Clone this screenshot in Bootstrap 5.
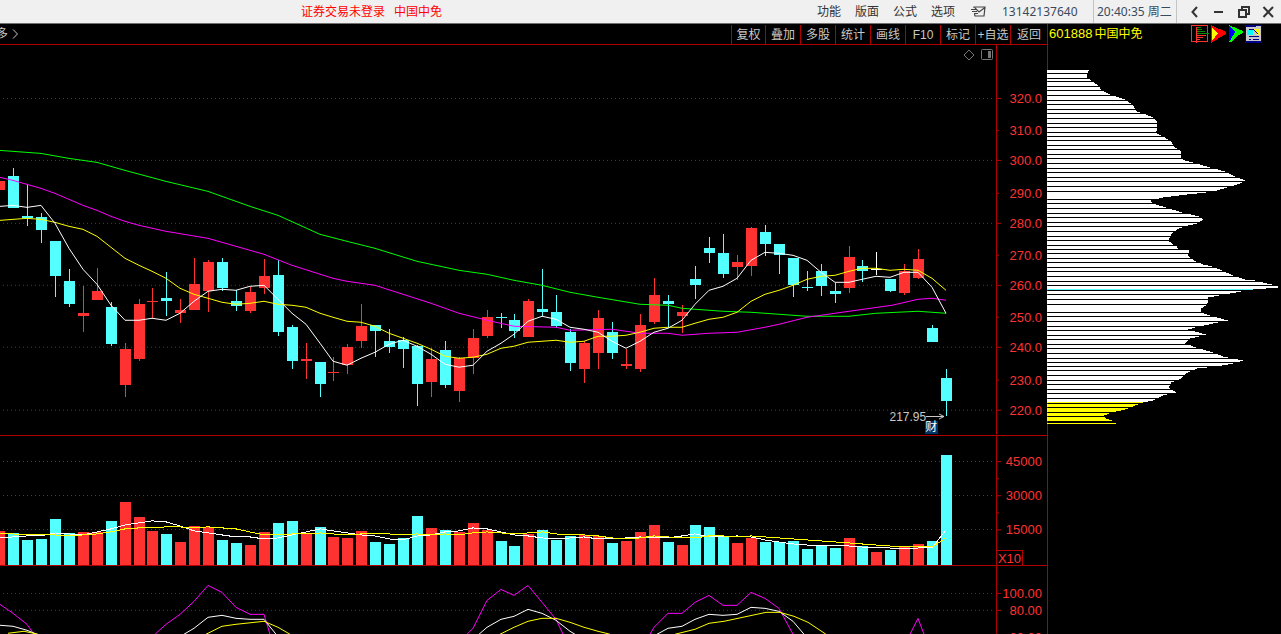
<!DOCTYPE html>
<html lang="zh-CN">
<head>
<meta charset="utf-8">
<meta name="viewport" content="width=device-width, initial-scale=1">
<title>601888 中国中免</title>
<link rel="stylesheet" href="https://cdn.jsdelivr.net/npm/bootstrap@5.3.0/dist/css/bootstrap.min.css">
<style>
:root { --line: #b00000; --up: #ff3232; --down: #54ffff; }
body { background: #000; color: #c8c8c8; font: 12px/16px "Liberation Sans", "Noto Sans CJK SC", sans-serif; }
svg { display: block; }
button { background: none; border: 0; padding: 0; color: inherit; font: inherit; }
.titlebar { height: 24px; background: #f0f0f0; border-bottom: 1px solid #707070; color: #333; font-family: "Noto Sans", "Noto Sans CJK SC", sans-serif; }
.login-state { padding-left: 23.5%; gap: 9px; }
.login-state a { color: #f00; text-decoration: none; }
.menus { gap: 14px; }
.phone { width: 106px; padding-left: 15px; color: #3a4a5c; }
.clock { width: 84px; padding-left: 3px; color: #3a4a5c; border: 1px solid #c4c4c4; border-width: 0 1px; line-height: 23px; }
.window-keys { width: 104px; padding: 0 6px 0 11px; }
.toolbar-row { height: 21px; border-bottom: 1px solid var(--line); }
.more-tab { margin-left: -4px; gap: 4px; }
.tool { width: 35px; height: 19px; border-left: 1px solid var(--line); white-space: nowrap; }
.tool:first-child { width: 34px; }
.tool:last-child { width: 37px; }
.pane { min-height: 0; border-bottom: 1px solid var(--line); }
.pane:last-child { border-bottom: 0; }
.pane-price { flex: 391 1 0; }
.pane-volume { flex: 130 1 0; }
.pane-kdj { flex: 68 1 0; }
.plot { min-width: 0; }
.fill-pane { position: absolute; inset: 0; width: 100%; height: 100%; }
.axis { width: 51px; }
.axis text { font-size: 13px; fill: var(--up); text-anchor: end; }
.unit { right: 24px; bottom: 0; width: 26px; height: 15px; border: 1px solid var(--line); border-width: 1px 1px 0 0; color: var(--up); font-size: 13px; line-height: 15px; text-align: center; }
.pane-keys { top: 4px; right: 3px; gap: 6px; }
.low-note { right: 5.1%; top: 94.2%; line-height: 10px; }
.finance-mark { right: 5.8%; top: 96.4%; width: 13px; height: 13px; background: #036; color: #fff; line-height: 13px; }
.side { width: 234px; }
.stock-title { height: 20px; padding-left: 2px; color: #ff0; }
.stock-code { font-size: 13px; margin-right: 2px; }
.side-keys { width: 90px; }
</style>
</head>
<body class="vh-100 d-flex flex-column overflow-hidden">
<header class="titlebar d-flex align-items-center flex-shrink-0">
  <div class="login-state d-flex flex-grow-1"><a href="#">证券交易未登录</a><a href="#">中国中免</a></div>
  <nav class="menus d-flex align-items-center">
    <button type="button">功能</button><button type="button">版面</button><button type="button">公式</button><button type="button">选项</button>
    <button type="button" aria-label="消息"><svg width="18" height="14" viewBox="0 0 18 14" fill="none" stroke="#444"><path d="M5 3V2H16L15 11H6L5.500 9M6 3L10 7L16 2.500M2 4.500H7M3 6.500H8M5 8.500H9" stroke-width="1.200"/></svg></button>
  </nav>
  <div class="phone">13142137640</div>
  <div class="clock">20:40:35 周二</div>
  <div class="window-keys d-flex justify-content-between align-items-center">
    <button type="button" aria-label="返回"><svg width="14" height="14" viewBox="0 0 14 14" fill="none" stroke="#333" stroke-width="2"><path d="M9 2L4.500 7L9 12"/></svg></button>
    <button type="button" aria-label="最小化"><svg width="14" height="14" viewBox="0 0 14 14"><path d="M2 6h9v2H2z" fill="#333"/></svg></button>
    <button type="button" aria-label="还原"><svg width="14" height="14" viewBox="0 0 14 14" fill="none" stroke="#333" stroke-width="2"><path d="M2 5H9V12H2ZM5 5V2H12V9H9"/></svg></button>
    <button type="button" aria-label="关闭"><svg width="14" height="14" viewBox="0 0 14 14" fill="none" stroke="#333" stroke-width="2"><path d="M2.500 2L12 12M12 2L2.500 12"/></svg></button>
  </div>
</header>
<main class="d-flex flex-grow-1 overflow-hidden">
  <section class="d-flex flex-column flex-grow-1 plot">
    <div class="toolbar-row d-flex justify-content-between align-items-end flex-shrink-0">
      <button type="button" class="more-tab d-flex align-items-center align-self-center"><span>多</span><svg width="7" height="10" viewBox="0 0 7 10" fill="none" stroke="#c8c8c8"><path d="M1 .5L5.500 5L1 9.500"/></svg></button>
      <div class="d-flex" id="tools"></div>
    </div>
    <div class="pane pane-price d-flex">
      <div class="plot position-relative flex-grow-1">
        <svg class="fill-pane" id="price" viewBox="0 45 996 390" preserveAspectRatio="none" shape-rendering="crispEdges"></svg>
        <div class="pane-keys position-absolute d-flex">
          <button type="button" aria-label="标记"><svg width="12" height="12" viewBox="0 0 12 12" fill="none" stroke="#777"><path d="M6 1L11 6L6 11L1 6Z"/></svg></button>
          <button type="button" aria-label="侧栏"><svg width="12" height="12" viewBox="0 0 12 12" fill="none" stroke="#777"><rect x=".5" y=".5" width="11" height="10" rx="1"/><path d="M7 2h3v7H7z" fill="#777" stroke="none"/></svg></button>
        </div>
        <div class="low-note position-absolute d-flex align-items-start"><span>217.95</span><svg width="19" height="10" viewBox="0 0 19 10" fill="none" stroke="#c8c8c8"><path d="M0 4.500H18M13 2L18 4.500L13 7"/></svg></div>
        <span class="finance-mark position-absolute">财</span>
      </div>
      <div class="axis position-relative"><svg class="fill-pane" id="priceAxis"></svg></div>
    </div>
    <div class="pane pane-volume d-flex">
      <div class="plot position-relative flex-grow-1"><svg class="fill-pane" id="volume" viewBox="0 436 996 129" preserveAspectRatio="none" shape-rendering="crispEdges"></svg></div>
      <div class="axis position-relative"><svg class="fill-pane" id="volumeAxis"></svg><span class="unit position-absolute">X10</span></div>
    </div>
    <div class="pane pane-kdj d-flex">
      <div class="plot position-relative flex-grow-1"><svg class="fill-pane" id="kdj" viewBox="0 566 996 68" preserveAspectRatio="none" shape-rendering="crispEdges"></svg></div>
      <div class="axis position-relative"><svg class="fill-pane" id="kdjAxis"></svg></div>
    </div>
  </section>
  <aside class="side d-flex flex-column flex-shrink-0 position-relative">
    <svg class="fill-pane" id="profile" viewBox="0 24 234 610" preserveAspectRatio="none" shape-rendering="crispEdges"></svg>
    <div class="stock-title d-flex justify-content-between align-items-center position-relative">
      <div><span class="stock-code">601888</span>中国中免</div>
      <div class="side-keys d-flex">
        <button type="button" aria-label="分布"><svg width="20" height="20" viewBox="0 0 20 20" fill="none" shape-rendering="crispEdges"><path d="M.5 1.500H16.500V17.500H.5Z" stroke="#ff3232"/><path d="M5 3.500H10M5 5.500H11M5 7.500H14M5 9.500H18" stroke="#0a8c0a"/><path d="M5 11.500H15M5 13.500H12M5 15.500H9M5.500 3V19" stroke="#ff3232"/></svg></button>
        <button type="button" aria-label="红旗"><svg width="18" height="20" viewBox="0 0 18 20" shape-rendering="crispEdges"><path d="M0 1L15 8V10L0 19Z" fill="#f00"/><path d="M1 4L7 9L1 17Z" fill="#ff0"/></svg></button>
        <button type="button" aria-label="绿旗"><svg width="16" height="20" viewBox="0 0 16 20" shape-rendering="crispEdges"><path d="M0 1L14 7V9L8 12L3 18H0Z" fill="#0f0"/><path d="M0 2L6 8L1 17H0Z" fill="#00f"/></svg></button>
        <button type="button" aria-label="报表"><svg width="18" height="20" viewBox="0 0 18 20" shape-rendering="crispEdges"><path d="M0 1H17V19H0Z" fill="#008"/><path d="M1 3H11V2H16V17H1Z" fill="#c8c8c8"/><path d="M2 6H8V11H2Z" fill="#0ff"/><path d="M9 5H15V11H12Z" fill="#ff0"/><path d="M4 5.500H8M8 5L13 10M4 12.500H14M4 15.500H6M8 15.500H14" stroke="#008"/></svg></button>
      </div>
    </div>
  </aside>
</main>
<script src="https://cdn.jsdelivr.net/npm/bootstrap@5.3.0/dist/js/bootstrap.bundle.min.js"></script>
<script>
const RED = '#ff3232', CYAN = '#54ffff', LINE = '#b00000';
const byId = id => document.getElementById(id);
byId('tools').innerHTML = ['复权','叠加','多股','统计','画线','F10','标记','+自选','返回']
  .map(t => `<button type="button" class="tool">${t}</button>`).join('');

// horizontal position of the n-th trading day
const dayX = n => 13 + 14 * n - Math.floor((n + 3) / 13) - (n === 61 ? 1 : 0);
const rect = (x, y, w, h, c) => `<rect x="${x}" y="${y}" width="${w}" height="${h}" fill="${c}"/>`;
const grid = ys => ys.map(y => `<path d="M3 ${y}.5H994" stroke="#b01010" stroke-dasharray="1 3"/>`).join('');
const poly = (pts, c) => `<polyline points="${pts.map(p => p[0] + ',' + (p[1] + .5)).join(' ')}" fill="none" stroke="${c}"/>`;
const pairs = s => s.trim().split(/\s+/).map(p => p.split(',').map(Number));
const series = a => a.map((y, i) => [i ? dayX(i - 1) : 0, y]);

// colour, high, body top, body bottom, low
const candles = `c168,176,208,208 c184,216,218,226 c213,217,230,243 c241,241,276,297 c269,281,304,307 r286,313,316,332 r268,291,300,300
c302,307,344,346 r343,349,385,397 r299,304,359,361 r288,301,302,318 c272,298,301,316 r299,310,313,323 r258,284,310,310 r260,262,291,312
c258,262,288,291 c290,301,306,311 r287,292,311,313 r259,276,288,294 c260,275,332,336 c325,327,361,369 r343,359,361,379 c362,362,384,397
r357,372,373,381 r344,347,365,374 r304,326,341,348 c325,325,331,357 c329,341,347,353 c337,340,349,368 c345,346,384,406 r348,359,382,397
c341,350,385,388 r357,358,391,402 r329,338,358,374 r310,317,336,338 c313,317,318,328 c314,320,331,338 r299,301,337,337 c269,309,312,316
c295,312,326,328 c329,332,363,371 r341,343,369,383 r310,318,353,369 c322,332,353,359 r349,364,366,369 r314,325,369,372 r278,295,322,324
c295,301,304,328 r305,312,316,333 c266,279,285,299 c237,248,253,263 c234,253,274,278 r255,262,267,280 r227,228,266,276 c225,232,244,256
c244,244,255,274 c258,258,285,297 c271,287,288,291 c264,271,286,296 c283,291,294,303 r246,257,288,293 c260,266,271,282 w252,269,270,275
c279,279,291,292 r264,271,293,295 r249,259,278,279 c325,328,342,342 c369,378,401,416`.trim().split(/\s+/)
  .map(s => [{ c: CYAN, r: RED, w: '#fff' }[s[0]], ...s.slice(1).split(',').map(Number)]);
const white = series([206,205,207,205,223,248,269,284,305,320,320,318,320,313,301,291,289,290,286,285,299,313,324,343,361,365,358,352,344,340,346,354,364,367,365,351,343,334,321,316,319,327,329,332,341,348,341,332,328,320,304,290,286,278,260,252,253,255,260,272,282,282,279,276,277,272,272,287,313]);
const yellow = series([220,219,218,219,222,226,229,236,247,258,265,271,278,288,294,298,302,304,303,301,304,305,307,313,317,321,322,326,333,338,343,349,356,358,357,354,348,346,342,341,340,342,341,336,336,335,332,328,327,327,323,319,317,312,301,294,290,285,279,276,275,271,268,268,270,269,270,278,290]);
const magenta = pairs(`0,177 13,180 27,184 41,188 55,193 69,199 83,205 97,210 111,216 125,221 139,225 166,231 208,238 236,246 264,254 292,265 333,278 347,281 375,285 403,294 431,303 459,313 487,320 514,326 556,327 570,330 612,329 640,333 668,333 682,335 709,333 737,332 765,327 779,324 807,317 849,311 892,305 918,299 932,298 946,300`);
const green = pairs(`0,150 41,153 69,158 97,162 125,170 166,181 208,191 250,206 278,215 320,234 347,241 375,248 417,261 459,270 487,274 514,280 542,285 570,292 598,297 640,304 668,305 682,308 695,309 723,311 751,312 793,315 807,316 849,316 876,313 918,311 946,313`);
byId('price').innerHTML = grid([98, 160, 223, 285, 347, 410]) + rect(-6, 181, 11, 9, RED) +
  candles.map(([c, hi, top, bottom, lo], n) => {
    const x = dayX(n);
    return rect(x, hi, 1, lo - hi, c) + rect(x - 5, top, 11, bottom - top, c);
  }).join('') + poly(green, '#0f0') + poly(magenta, '#f0f') + poly(yellow, '#ff0') + poly(white, '#fff');

const volTop = [533,540,539,519,533,532,532,521,502,517,531,534,542,526,527,540,543,545,532,523,521,534,527,537,538,531,542,544,538,516,528,530,532,523,530,541,546,534,530,540,536,535,536,543,541,532,525,542,545,525,527,536,543,538,542,542,541,549,546,548,538,546,551,550,547,544,541,455];
const volWhite = series([537,536,535,535,532,533,534,531,528,524,522,520,521,525,530,532,534,536,536,538,537,534,531,528,530,532,534,535,538,539,535,534,531,530,527,528,531,534,535,537,538,537,536,538,538,537,536,537,537,535,533,536,536,535,536,539,541,543,544,545,545,545,546,547,547,548,547,529]);
const volYellow = series([533,533,534,534,534,535,534,533,531,528,527,527,526,526,527,526,527,528,531,534,534,533,533,532,533,534,533,533,533,534,533,534,533,534,532,531,532,533,532,531,533,534,534,535,537,538,537,535,536,537,537,535,535,536,535,536,537,538,539,540,541,542,543,544,545,546,546,546,537]);
volWhite.splice(-1, 1, [932, 547], [946, 529]);
byId('volume').innerHTML = grid([461, 495, 529]) + rect(-6, 531, 11, 33, RED) +
  volTop.map((y, n) => rect(dayX(n) - 5, y, 11, 564 - y, n === 62 ? RED : candles[n][0])).join('') +
  poly(volWhite, '#fff') + poly(volYellow, '#ff0');

const kdj = [
  ['#f0f', ['0,604 13,613 27,624 34,634', '155,634 166,624 180,614 194,601 208,585 222,592 236,607 250,614 264,614 270,634', '467,634 473,628 487,600 501,589 514,595 528,585 542,602 556,619 563,634', '650,634 654,627 668,613 682,613 695,602 709,595 723,605 737,605 751,592 765,598 779,608 793,634', '910,634 918,618 924,634']],
  ['#fff', ['0,625 13,626 27,630 37,634', '184,634 194,628 208,617 222,615 236,618 250,619 264,619 276,634', '479,634 487,627 501,619 514,616 528,609 542,613 556,620 570,631 575,634', '657,634 668,628 682,626 695,619 709,614 723,615 737,614 751,607 765,608 779,611 793,621 804,634']],
  ['#ff0', ['8,633 24,631 38,634', '206,634 222,626 236,624 264,621 278,627 290,634', '500,634 514,627 528,621 542,618 556,618 570,622 584,627 598,631 610,634', '675,634 695,629 709,623 724,621 738,618 752,615 766,612 780,612 794,616 808,622 826,634']]
];
byId('kdj').innerHTML = grid([593, 610]) + kdj.map(([c, parts]) => parts.map(p => poly(pairs(p), c)).join('')).join('');

// price scales: positions are shares of the pane's height
function drawAxis(id, top, height, labels, minor) {
  const pc = y => ((y - top) / height * 100).toFixed(3) + '%';
  const tick = (y, w) => `<line x1="0" x2="${w}" y1="${pc(y + .5)}" y2="${pc(y + .5)}" stroke="${LINE}"/>`;
  byId(id).innerHTML = `<line x1=".5" x2=".5" y1="0" y2="100%" stroke="${LINE}"/>` +
    labels.map(([y, t, w = 5]) => tick(y, w) + `<text x="46" y="${pc(y + 5)}">${t}</text>`).join('') +
    minor.map(y => tick(y, 3)).join('');
}
drawAxis('priceAxis', 45, 390, [[98, '320.0'], [130, '310.0', 3], [160, '300.0'], [193, '290.0', 3], [223, '280.0'], [255, '270.0', 3], [285, '260.0'], [317, '250.0', 3], [347, '240.0'], [380, '230.0', 3], [410, '220.0']], []);
drawAxis('volumeAxis', 436, 129, [[461, '45000'], [495, '30000'], [529, '15000']], [478, 512]);
drawAxis('kdjAxis', 566, 68, [[593, '100.00'], [610, '80.00'], [637, '60.00']], []);

// holding-cost distribution, as "y,right edge" points
const hull = pairs(`70,42 73,40 77,40 79,43 85,51 90,55 94,63 98,75 100,80 105,86 111,90 113,96 117,106 121,110 130,110 132,108 136,116 141,124 146,127 151,134 158,134 160,138 164,153 167,163 171,178 175,186 178,193 180,198 183,193 187,180 190,170 192,159 194,140 197,116 200,104 203,105 207,119 212,135 216,152 219,156 223,150 226,137 229,130 234,124 240,121 244,126 246,130 249,131 250,142 252,142 253,141 255,141 260,147 264,156 266,165 270,175 275,186 279,198 280,208 283,220 285,230 287,231 289,206 291,194 294,178 297,161 301,161 305,159 308,154 312,154 316,166 320,181 323,166 327,148 329,141 334,159 336,152 338,143 343,138 347,149 352,166 356,176 360,196 363,186 366,170 368,150 373,139 378,134 382,124 387,122 392,129 395,116 400,106 402,96 405,88 409,78 412,65 415,57 418,59 420,65 421,65`);
const gaps = new Set([73,78,81,86,90,95,100,104,109,113,118,123,127,132,136,140,145,149,154,158,163,168,172,177,181,186,191,199,203,208,213,217,222,226,231,236,240,245,249,253,258,262,267,271,276,281,285,290,294,299,304,312,316,321,326,330,335,339,344,348,353,358,362,366,370,375,380,384,389,393,398,403,407,412,416]);
let rows = rect(0, 24, 1, 610, LINE);
for (let y = 70; y <= 420; y++) {
  if (gaps.has(y)) continue;
  const i = hull.findIndex((p, k) => p[0] <= y && hull[k + 1][0] > y);
  const [y0, x0] = hull[i], [y1, x1] = hull[i + 1];
  rows += rect(0, y, Math.round(x0 + (x1 - x0) * (y - y0) / (y1 - y0)), 1, y >= 402 ? '#ff0' : y === 289 ? CYAN : '#fff');
}
byId('profile').innerHTML = rows + rect(0, 423, 69, 1, '#ff0');
</script>
</body>
</html>
